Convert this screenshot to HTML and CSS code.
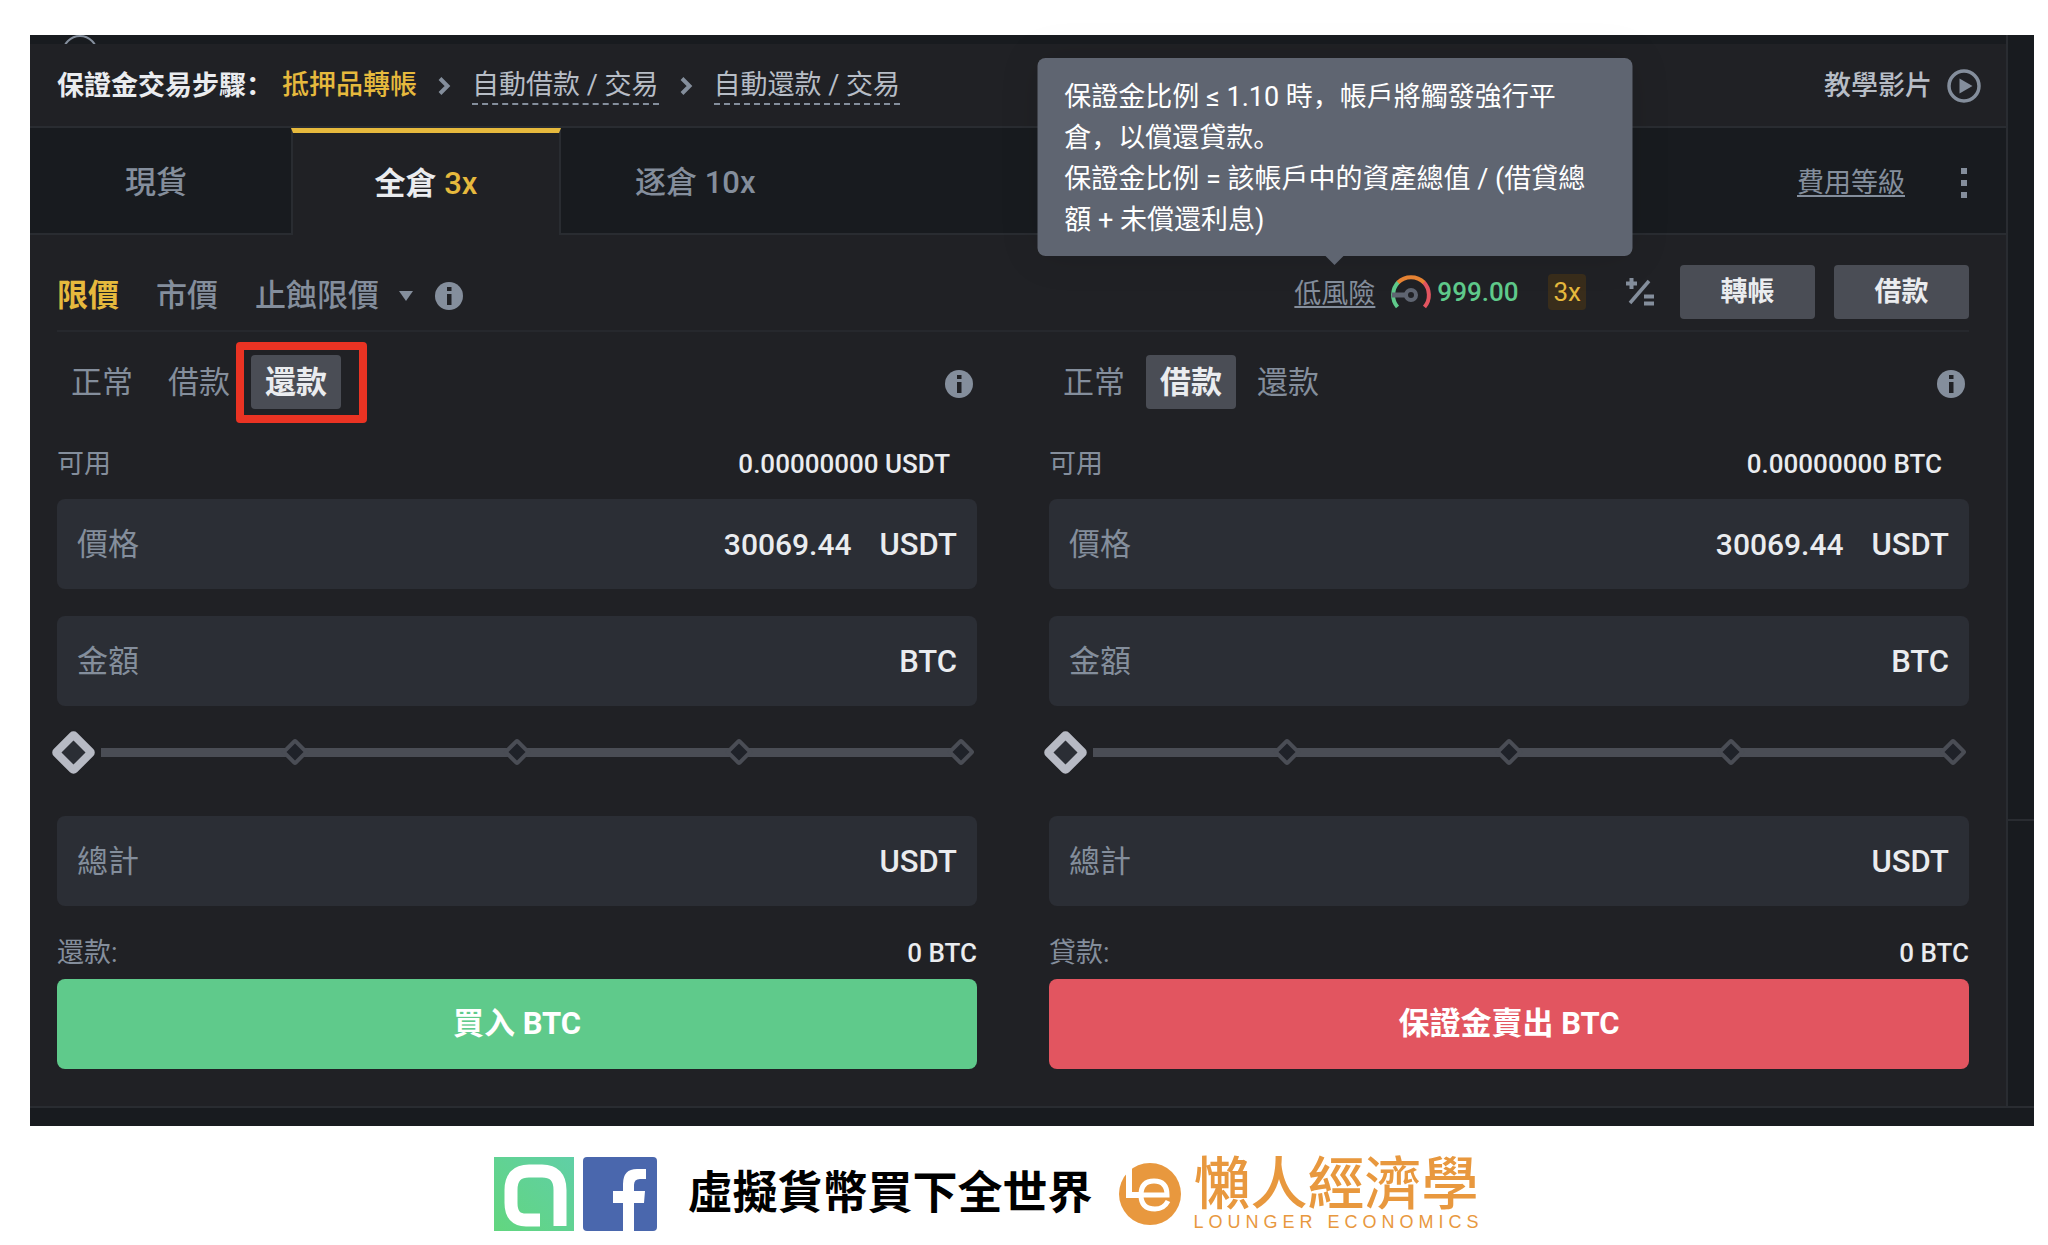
FILE: index.html
```html
<!DOCTYPE html>
<html lang="zh">
<head>
    <meta charset="UTF-8">
    <meta name="viewport" content="width=device-width, initial-scale=1.0">
    <title>保證金交易</title>
    <link rel="stylesheet" href="styles.css">
</head>
<body>
    <!-- shared icons -->
    <svg class="sprite" aria-hidden="true">
        <symbol id="icon-info" viewBox="0 0 28 28">
            <circle cx="14" cy="14" r="14" fill="currentColor"/>
            <path d="M12 5h4.500v4H12zM12 12h4.500v11H12z" fill="#202125"/>
        </symbol>
        <symbol id="icon-chevron" viewBox="0 0 13 18">
            <path d="M2 1.500l7.500 7.500L2 16.500" fill="none" stroke="currentColor" stroke-width="4"/>
        </symbol>
    </svg>

    <div class="app">
        <div class="workspace">
            <main class="panel">
                <div class="top-strip">
                    <svg class="top-circle" width="36" height="36" viewBox="0 0 36 36" aria-hidden="true">
                        <circle cx="18" cy="18" r="17" fill="none" stroke="currentColor" stroke-width="2"/>
                    </svg>
                </div>

                <nav class="steps">
                    <span class="steps-title">保證金交易步驟：</span>
                    <a class="step-link current" href="#">抵押品轉帳</a>
                    <svg class="chevron"><use href="#icon-chevron"/></svg>
                    <a class="step-link dashed" href="#">自動借款 / 交易</a>
                    <svg class="chevron"><use href="#icon-chevron"/></svg>
                    <a class="step-link dashed" href="#">自動還款 / 交易</a>
                    <a class="tutorial" href="#">
                        教學影片
                        <svg width="34" height="34" viewBox="0 0 34 34" aria-hidden="true">
                            <circle cx="17" cy="17" r="15" fill="none" stroke="#848e9c" stroke-width="3.500"/>
                            <path d="M12.500 9.500l13 7.500-13 7.500z" fill="#848e9c"/>
                        </svg>
                    </a>
                </nav>

                <div class="tabs">
                    <button class="tab" type="button">現貨</button>
                    <button class="tab active" type="button">全倉 <span>3x</span></button>
                    <button class="tab" type="button">逐倉 10x</button>
                    <div class="tabs-end">
                        <a class="fee-link" href="#">費用等級</a>
                        <button class="more" type="button" aria-label="更多">
                            <svg width="6" height="30" viewBox="0 0 6 30"><path d="M0 0h6v6H0zM0 12h6v6H0zM0 24h6v6H0z" fill="currentColor"/></svg>
                        </button>
                    </div>
                </div>

                <div class="content">
                    <div class="toolbar">
                        <div class="order-types">
                            <button class="order-type active" type="button">限價</button>
                            <button class="order-type" type="button">市價</button>
                            <label class="stop-type">
                                <select aria-label="止蝕類型">
                                    <option>止蝕限價</option>
                                </select>
                                <svg width="14" height="10" viewBox="0 0 14 10" aria-hidden="true"><path d="M0 0h14L7 10z" fill="currentColor"/></svg>
                            </label>
                            <svg class="info"><use href="#icon-info"/></svg>
                        </div>

                        <div class="account">
                            <div class="risk">
                                <a class="risk-link" href="#">低風險</a>
                                <div class="tooltip" role="tooltip">保證金比例 ≤ 1.10 時，帳戶將觸發強行平倉，以償還貸款。<br>保證金比例 = 該帳戶中的資產總值 / (借貸總額 + 未償還利息)</div>
                            </div>
                            <svg class="gauge" width="42" height="36" viewBox="0 0 42 36" aria-hidden="true">
                                <g fill="none" stroke-width="4">
                                    <path d="M7.500 33A18.500 18.500 0 0 1 8.500 8" stroke="#5fca8b"/>
                                    <path d="M33.500 8A18.500 18.500 0 0 1 34.500 33" stroke="#e25560"/>
                                    <path d="M8 8.500A18.500 18.500 0 0 1 34 8.500" stroke="#e88434"/>
                                    <path d="M2 21h14" stroke="#5f6571" stroke-width="5"/>
                                    <circle cx="21" cy="21" r="5" stroke="#5f6571"/>
                                </g>
                            </svg>
                            <span class="ratio">999.00</span>
                            <span class="leverage">3x</span>
                            <button class="calc" type="button" aria-label="計算機">
                                <svg width="28" height="28" viewBox="0 0 28 28">
                                    <path d="M5.500 0v11M0 5.500h11M18 18.500h10M18 25.500h10" stroke="currentColor" stroke-width="4"/>
                                    <path d="M23 3L4 25" stroke="currentColor" stroke-width="3.500"/>
                                </svg>
                            </button>
                            <button class="small-btn" type="button">轉帳</button>
                            <button class="small-btn" type="button">借款</button>
                        </div>
                    </div>

                    <div class="columns">
                        <form class="order">
                            <div class="modes">
                                <button class="mode" type="button">正常</button>
                                <button class="mode" type="button">借款</button>
                                <button class="mode active marked" type="button">還款</button>
                                <svg class="info"><use href="#icon-info"/></svg>
                            </div>
                            <div class="available"><span>可用</span><span class="value">0.00000000 USDT</span></div>
                            <div class="fields">
                                <div class="field">
                                    <label for="buyPrice">價格</label>
                                    <input id="buyPrice" type="text" value="30069.44">
                                    <span class="unit">USDT</span>
                                </div>
                                <div class="field">
                                    <label for="buyAmount">金額</label>
                                    <input id="buyAmount" type="text">
                                    <span class="unit">BTC</span>
                                </div>
                            </div>
                            <div class="slider">
                                <div class="track"></div>
                                <div class="ticks"><i></i><i></i><i></i><i></i><i></i></div>
                                <input type="range" min="0" max="100" value="0" aria-label="買入比例">
                            </div>
                            <div class="field">
                                <label for="buyTotal">總計</label>
                                <input id="buyTotal" type="text">
                                <span class="unit">USDT</span>
                            </div>
                            <div class="loan"><span>還款:</span><span class="value">0 BTC</span></div>
                            <button class="submit buy" type="button">買入 BTC</button>
                        </form>

                        <form class="order">
                            <div class="modes">
                                <button class="mode" type="button">正常</button>
                                <button class="mode active" type="button">借款</button>
                                <button class="mode" type="button">還款</button>
                                <svg class="info"><use href="#icon-info"/></svg>
                            </div>
                            <div class="available"><span>可用</span><span class="value">0.00000000 BTC</span></div>
                            <div class="fields">
                                <div class="field">
                                    <label for="sellPrice">價格</label>
                                    <input id="sellPrice" type="text" value="30069.44">
                                    <span class="unit">USDT</span>
                                </div>
                                <div class="field">
                                    <label for="sellAmount">金額</label>
                                    <input id="sellAmount" type="text">
                                    <span class="unit">BTC</span>
                                </div>
                            </div>
                            <div class="slider">
                                <div class="track"></div>
                                <div class="ticks"><i></i><i></i><i></i><i></i><i></i></div>
                                <input type="range" min="0" max="100" value="0" aria-label="賣出比例">
                            </div>
                            <div class="field">
                                <label for="sellTotal">總計</label>
                                <input id="sellTotal" type="text">
                                <span class="unit">USDT</span>
                            </div>
                            <div class="loan"><span>貸款:</span><span class="value">0 BTC</span></div>
                            <button class="submit sell" type="button">保證金賣出 BTC</button>
                        </form>
                    </div>
                </div>
            </main>
            <aside class="side">
                <div class="side-top"></div>
                <div class="side-bottom"></div>
            </aside>
        </div>
    </div>

    <footer class="footer">
        <svg width="80" height="74" viewBox="0 0 80 74" aria-hidden="true">
            <defs>
                <linearGradient id="green" x1="0" y1="1" x2="1" y2="0">
                    <stop offset="0" stop-color="#62d67f"/>
                    <stop offset="1" stop-color="#60cfa6"/>
                </linearGradient>
            </defs>
            <rect width="80" height="74" fill="url(#green)"/>
            <path d="M46 63H32Q17 63 17 46V33Q17 14 35 14H48Q66 14 66 33V69" fill="none" stroke="#fff" stroke-width="13"/>
        </svg>
        <svg width="74" height="74" viewBox="0 0 74 74" aria-hidden="true">
            <rect width="74" height="74" rx="4" fill="#4a67ad"/>
            <path d="M40 74V46H30V34H40V27Q40 12 54 12H63V22H57Q51 22 51 28V34H62L61 46H51V74z" fill="#fff"/>
        </svg>
        <p class="slogan">虛擬貨幣買下全世界</p>
        <div class="brand">
            <svg width="64" height="64" viewBox="0 0 64 64" aria-hidden="true">
                <circle cx="32" cy="32" r="31" fill="#e8983e"/>
                <path d="M11 0V33H24" fill="none" stroke="#fff" stroke-width="6"/>
                <path d="M23 33H49Q49 19 36 19Q23 19 23 33Q23 47 37 47Q46 47 50 39" fill="none" stroke="#fff" stroke-width="5"/>
            </svg>
            <div class="brand-text">
                <strong>懶人經濟學</strong>
                <small>LOUNGER ECONOMICS</small>
            </div>
        </div>
    </footer>
</body>
</html>
```

FILE: styles.css
```css
:root {
    --panel: #202125;
    --dark: #181b1f;
    --line: #292c31;
    --field: #2b2e35;
    --button: #4a4d55;
    --text: #eaecef;
    --muted: #848e9c;
    --light: #b7bdc6;
    --yellow: #e6b93d;
    --green: #5fca8b;
    --red: #e25560;
    --orange: #e8983e;
}

* {
    box-sizing: border-box;
    margin: 0;
    padding: 0;
}

body {
    font-family: Roboto, "Noto Sans CJK SC", sans-serif;
    font-size: 27px;
    line-height: 40px;
    color: var(--text);
    background-color: #fff;
}

button,
input,
select {
    font: inherit;
    color: inherit;
    background: none;
    border: none;
}

button {
    cursor: pointer;
}

a {
    color: inherit;
    text-decoration: none;
}

svg {
    flex-shrink: 0;
}

.sprite {
    display: none;
}

.app {
    margin: 35px 14px 0 30px;
    padding-bottom: 18px;
    background-color: var(--dark);
}

.workspace {
    display: flex;
    border-bottom: 2px solid var(--line);
}

.panel {
    flex: 1;
    min-width: 0;
    background-color: var(--panel);
}

.top-strip {
    height: 9px;
    padding-left: 32px;
    overflow: hidden;
    background-color: var(--dark);
    color: var(--muted);
}

.top-circle {
    display: block;
}

/* steps */
.steps {
    display: flex;
    align-items: center;
    gap: 21px;
    height: 84px;
    padding: 2px 25px 0 27px;
    border-bottom: 2px solid var(--line);
}

.steps-title {
    font-weight: 700;
    margin-right: -12px;
}

.step-link {
    line-height: 36px;
    color: var(--light);
    border-bottom: 2px solid transparent;
}

.step-link.current {
    color: var(--yellow);
    font-weight: 500;
}

.step-link.dashed {
    border-bottom: 2px dashed var(--muted);
}

.chevron {
    width: 13px;
    height: 18px;
    color: var(--muted);
}

.tutorial {
    display: flex;
    align-items: center;
    gap: 15px;
    margin-left: auto;
    color: var(--light);
    font-weight: 500;
}

/* tabs */
.tabs {
    display: flex;
    height: 107px;
    background-color: var(--dark);
}

.tab {
    padding: 5px 74px 0;
    font-size: 31px;
    font-weight: 500;
    color: var(--muted);
    border-bottom: 2px solid var(--line);
}

.tab:first-child {
    padding: 5px 104px 0 95px;
}

.tab.active {
    width: 270px;
    padding: 0;
    font-weight: 700;
    color: var(--text);
    background-color: var(--panel);
    border: solid var(--line);
    border-width: 5px 2px 0;
    border-top-color: var(--yellow);
}

.tab.active span {
    font-weight: 500;
    color: var(--yellow);
}

.tabs-end {
    flex: 1;
    display: flex;
    align-items: center;
    justify-content: flex-end;
    gap: 56px;
    padding: 5px 39px 0 0;
    color: var(--muted);
    border-bottom: 2px solid var(--line);
}

.fee-link,
.risk-link {
    text-decoration: underline;
    text-decoration-thickness: 2px;
    text-underline-offset: 3px;
}

.more {
    display: flex;
}

/* toolbar */
.content {
    padding: 0 37px 37px 27px;
}

.toolbar {
    display: flex;
    align-items: center;
    justify-content: space-between;
    height: 97px;
    padding: 31px 0 12px;
    color: var(--muted);
    border-bottom: 2px solid #26282d;
}

.order-types {
    display: flex;
    align-items: center;
    padding-top: 8px;
    font-size: 31px;
}

.order-type {
    margin-right: 37px;
    font-weight: 500;
}

.order-type.active {
    font-weight: 700;
    color: var(--yellow);
}

.stop-type {
    display: flex;
    align-items: center;
    gap: 20px;
    margin-right: 22px;
}

.stop-type select {
    appearance: none;
    font-weight: 500;
    cursor: pointer;
}

.info {
    width: 28px;
    height: 28px;
    color: var(--muted);
}

.account {
    display: flex;
    align-items: center;
}

.risk {
    position: relative;
    padding-top: 4px;
    margin-right: 15px;
}

.gauge {
    margin-right: 5px;
}

.ratio {
    margin-right: 30px;
    font-size: 26px;
    font-weight: 500;
    color: var(--green);
}

.leverage {
    padding: 0 5px;
    margin-right: 40px;
    font-size: 26px;
    line-height: 36px;
    color: var(--yellow);
    background-color: #392d1b;
    border-radius: 4px;
}

.calc {
    display: flex;
    margin-right: 7px;
}

.small-btn {
    width: 135px;
    height: 54px;
    margin-left: 19px;
    font-weight: 700;
    color: var(--text);
    background-color: var(--button);
    border-radius: 4px;
}

.tooltip {
    position: absolute;
    z-index: 2;
    bottom: calc(100% + 14px);
    left: 50%;
    width: 595px;
    padding: 19px 27px 15px;
    transform: translateX(-50%);
    line-height: 41px;
    color: #fff;
    background-color: #5f6571;
    border-radius: 8px;
    box-shadow: 0 0 40px rgba(0, 0, 0, 0.1);
}

.tooltip::after {
    content: "";
    position: absolute;
    top: 100%;
    left: 50%;
    margin-left: -9px;
    border: 9px solid transparent;
    border-top-color: #5f6571;
    border-bottom: none;
}

/* order forms */
.columns {
    display: grid;
    grid-template-columns: 1fr 1fr;
    gap: 72px;
    padding-top: 23px;
}

.modes {
    display: flex;
    align-items: center;
    gap: 7px;
    padding-right: 4px;
}

.mode {
    position: relative;
    width: 90px;
    height: 54px;
    padding-top: 2px;
    font-size: 31px;
    color: var(--muted);
    border-radius: 4px;
}

.mode.active {
    font-weight: 700;
    color: var(--text);
    background-color: var(--button);
}

.mode.marked::after {
    content: "";
    position: absolute;
    inset: -13px -26px -14px -15px;
    border: 8px solid #ea3323;
    border-radius: 4px;
}

.modes .info {
    margin: 4px 0 0 auto;
}

.available,
.loan {
    display: flex;
    justify-content: space-between;
    color: var(--muted);
}

.available {
    padding: 35px 27px 15px 0;
}

.loan {
    padding: 27px 0 6px;
}

.value {
    font-size: 26px;
    font-weight: 500;
    color: var(--text);
}

.fields {
    display: grid;
    gap: 27px;
}

.field {
    display: flex;
    align-items: center;
    height: 90px;
    padding: 2px 20px 0;
    font-size: 31px;
    background-color: var(--field);
    border-radius: 8px;
}

.field label {
    color: var(--muted);
}

.field input {
    flex: 1;
    min-width: 0;
    margin-right: 28px;
    font-size: 30px;
    font-weight: 500;
    text-align: right;
    outline: none;
}

.unit {
    font-weight: 500;
}

/* track, ticks and range input share one grid cell */
.slider {
    display: grid;
    align-items: center;
    height: 44px;
    margin: 24px 0 42px;
}

.slider > * {
    grid-area: 1 / 1;
}

.track {
    height: 9px;
    margin: 0 16px 0 44px;
    background-color: var(--button);
}

.ticks {
    display: flex;
    justify-content: space-between;
    padding: 0 6px;
}

.ticks i {
    width: 20px;
    height: 20px;
    background-color: #1f2229;
    border: 4px solid var(--button);
    border-radius: 3px;
    transform: rotate(45deg);
}

.slider input {
    appearance: none;
    width: 100%;
    height: 44px;
    cursor: pointer;
}

.slider input::-webkit-slider-thumb {
    appearance: none;
    width: 33px;
    height: 33px;
    background-color: var(--field);
    border: 8px solid #b7bac4;
    border-radius: 5px;
    box-shadow: 0 0 0 2px var(--panel);
    transform: rotate(45deg);
}

.submit {
    display: block;
    width: 100%;
    height: 90px;
    font-size: 31px;
    font-weight: 700;
    color: #fff;
    border-radius: 8px;
}

.submit.buy {
    background-color: var(--green);
}

.submit.sell {
    background-color: var(--red);
}

/* right edge */
.side {
    display: flex;
    flex-direction: column;
    width: 28px;
    border-left: 2px solid var(--line);
}

.side-top {
    flex: 11;
}

.side-bottom {
    flex: 4;
    border-top: 2px solid var(--line);
}

/* footer */
.footer {
    display: flex;
    align-items: center;
    justify-content: center;
    gap: 9px;
    padding: 31px 70px 0 0;
}

.slogan {
    margin: 0 17px 0 21px;
    font-size: 45px;
    line-height: 60px;
    font-weight: 700;
    color: #000;
}

.brand {
    display: flex;
    align-items: center;
    gap: 11px;
    color: var(--orange);
}

.brand-text {
    display: flex;
    flex-direction: column;
}

.brand-text strong {
    font-size: 57px;
    line-height: 56px;
    font-weight: 500;
}

.brand-text small {
    font-family: "Liberation Sans", sans-serif;
    font-size: 18px;
    line-height: 18px;
    letter-spacing: 5px;
}
```
